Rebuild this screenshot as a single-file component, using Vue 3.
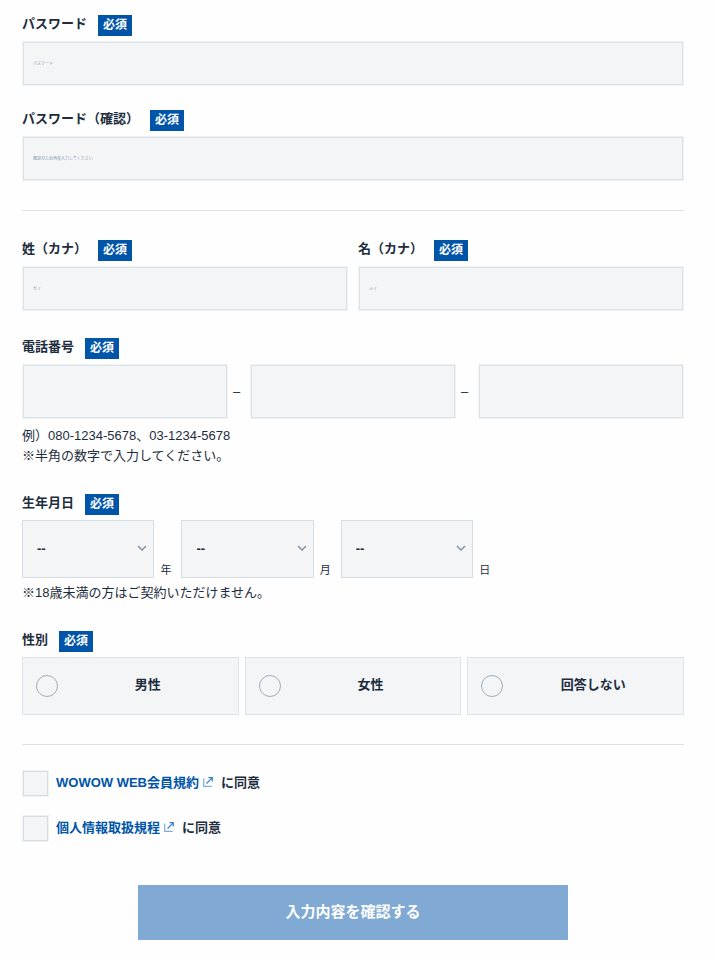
<template>
  <form class="entry-form" lang="ja" @submit.prevent>
    <div class="field">
      <div class="field-head">
        <label class="field-label" for="password">パスワード</label>
        <span class="required">必須</span>
      </div>
      <input id="password" v-model="form.password" class="text-input" type="password" placeholder="パスワード" autocomplete="new-password">
    </div>

    <div class="field">
      <div class="field-head">
        <label class="field-label" for="password-confirm">パスワード（確認）</label>
        <span class="required">必須</span>
      </div>
      <input id="password-confirm" v-model="form.passwordConfirm" class="text-input" type="password" placeholder="確認のため再度入力してください" autocomplete="new-password">
    </div>

    <hr class="divider">

    <div class="name-row">
      <div v-for="item in nameFields" :key="item.id" class="field">
        <div class="field-head">
          <label class="field-label" :for="item.id">{{ item.label }}</label>
          <span class="required">必須</span>
        </div>
        <input :id="item.id" v-model="form[item.id]" class="text-input" type="text" :placeholder="item.placeholder">
      </div>
    </div>

    <div class="field" role="group" aria-labelledby="tel-label">
      <div class="field-head">
        <label id="tel-label" class="field-label" for="tel-0">電話番号</label>
        <span class="required">必須</span>
      </div>
      <div class="tel-row">
        <template v-for="(part, i) in form.tel" :key="i">
          <span v-if="i > 0" class="tel-dash">–</span>
          <input :id="`tel-${i}`" v-model="form.tel[i]" class="text-input tel-input" type="tel" aria-labelledby="tel-label">
        </template>
      </div>
      <p class="note">例）080-1234-5678、03-1234-5678<br>※半角の数字で入力してください。</p>
    </div>

    <div class="field" role="group" aria-labelledby="birth-label">
      <div class="field-head">
        <label id="birth-label" class="field-label" for="year">生年月日</label>
        <span class="required">必須</span>
      </div>
      <div class="birth-row">
        <template v-for="item in birthFields" :key="item.id">
          <div class="select-wrap">
            <select :id="item.id" v-model="form[item.id]" class="select">
              <option value="">--</option>
              <option v-for="n in item.options" :key="n" :value="n">{{ n }}</option>
            </select>
            <svg class="chevron" viewBox="0 0 10 6" aria-hidden="true">
              <path d="M1 1l4 4 4-4" />
            </svg>
          </div>
          <label class="unit" :for="item.id">{{ item.unit }}</label>
        </template>
      </div>
      <p class="note">※18歳未満の方はご契約いただけません。</p>
    </div>

    <div class="field" role="radiogroup" aria-labelledby="gender-label">
      <div class="field-head">
        <span id="gender-label" class="field-label">性別</span>
        <span class="required">必須</span>
      </div>
      <div class="radio-row">
        <label v-for="item in genders" :key="item" class="radio-card">
          <input v-model="form.gender" class="radio" type="radio" name="gender" :value="item">
          <span class="radio-text">{{ item }}</span>
        </label>
      </div>
    </div>

    <hr class="divider">

    <div class="agreements">
      <div v-for="item in agreements" :key="item.id" class="agreement">
        <input :id="item.id" v-model="form[item.id]" class="checkbox" type="checkbox">
        <label class="agreement-label" :for="item.id">
          <a class="link" href="#">{{ item.text }}<svg class="external" viewBox="0 0 10 10" aria-hidden="true">
            <path d="M.7 1.500v7.800h8" opacity=".65" />
            <path d="M5.500 .7h3.800v3.800M9.200 .8L3.500 6.500" />
          </svg></a>
          <span>に同意</span>
        </label>
      </div>
    </div>

    <button class="submit" type="submit">入力内容を確認する</button>
  </form>
</template>

<script setup>
import { reactive } from 'vue';

const range = (from, to) => Array.from({ length: to - from + 1 }, (_, i) => from + i);

const form = reactive({
  password: '',
  passwordConfirm: '',
  sei: '',
  mei: '',
  tel: ['', '', ''],
  year: '',
  month: '',
  day: '',
  gender: '',
  terms: false,
  privacy: false
});

const nameFields = [
  { id: 'sei', label: '姓（カナ）', placeholder: 'セイ' },
  { id: 'mei', label: '名（カナ）', placeholder: 'メイ' }
];

const birthFields = [
  { id: 'year', unit: '年', options: range(1920, 2010) },
  { id: 'month', unit: '月', options: range(1, 12) },
  { id: 'day', unit: '日', options: range(1, 31) }
];

const genders = ['男性', '女性', '回答しない'];

const agreements = [
  { id: 'terms', text: 'WOWOW WEB会員規約' },
  { id: 'privacy', text: '個人情報取扱規程' }
];
</script>

<style>
body {
  margin: 0;
  background: #fefefe;
}
</style>

<style scoped>
.entry-form {
  box-sizing: border-box;
  padding: 15px 31px 19px 22px;
  color: #1d2d3d;
  font-family: 'Liberation Sans', 'Noto Sans CJK JP', sans-serif;
  font-size: 13px;
  line-height: 20px;
}

.entry-form *,
.entry-form *::before {
  box-sizing: border-box;
}

input,
select,
button {
  margin: 0;
  color: inherit;
  font-family: inherit;
  border-radius: 0;
  appearance: none;
}

/* 項目 */
.field + .field {
  margin-top: 24px;
}

.field-head {
  display: flex;
  align-items: flex-start;
  gap: 11px;
  height: 21px;
  margin-bottom: 5px;
}

.field-label {
  font-weight: 700;
  line-height: 18px;
}

.required {
  padding: 0 5px;
  background: #0055a8;
  color: #fff;
  font-size: 12px;
  font-weight: 700;
  line-height: 20px;
  height: 21px;
}

.text-input {
  display: block;
  width: 100%;
  height: 45px;
  padding: 0 10px;
  background: #f3f5f7;
  border: 1px solid #f0f2f4;
  box-shadow: inset 0 0 0 1px #dce1e6;
  font-size: 4px;
}

.text-input::placeholder {
  color: #8d9cb0;
  opacity: 1;
}

.divider {
  height: 1px;
  margin: 29px 0;
  border: 0;
  background: #dfe2e6;
}

.name-row {
  display: grid;
  grid-template-columns: 1fr 1fr;
  gap: 10px;
  margin-bottom: 27px;
}

.name-row .field {
  margin-top: 0;
}

/* 電話番号 */
.tel-row {
  display: flex;
  align-items: center;
}

.tel-input {
  flex: 1;
  min-width: 0;
  height: 55px;
  font-size: 13px;
}

.tel-dash {
  width: 22px;
  padding-left: 5px;
  line-height: 18px;
}

.note {
  margin: 7px 0 28px;
}

/* 生年月日 */
.birth-row {
  display: flex;
  align-items: flex-end;
}

.select-wrap {
  position: relative;
  width: 20%;
}

.select {
  display: block;
  width: 100%;
  height: 58px;
  padding: 0 14px 2px;
  background: #f3f5f7;
  border: 1px solid #d6dde4;
  font-size: 13px;
  font-weight: 700;
}

.chevron {
  position: absolute;
  top: 50%;
  right: 7px;
  width: 10px;
  height: 6px;
  margin-top: -4px;
  fill: none;
  stroke: #8494a5;
  stroke-width: 1.5;
  pointer-events: none;
}

.unit {
  width: 27px;
  padding-left: 6px;
  font-size: 11px;
  line-height: 16px;
}

.birth-row + .note {
  margin-top: 5px;
}

/* 性別 */
.radio-row {
  display: grid;
  grid-template-columns: repeat(3, 1fr);
  gap: 6px;
}

.radio-card {
  display: flex;
  align-items: center;
  height: 58px;
  padding-left: 13px;
  background: #f3f5f7;
  border: 1px solid #dfe2e8;
}

.radio {
  flex: none;
  width: 22px;
  height: 22px;
  background: transparent;
  border: 1px solid #a0adba;
  border-radius: 50%;
}

.radio:checked {
  border: 6px solid #0055a8;
}

.radio-text {
  flex: 1;
  padding-bottom: 2px;
  font-weight: 700;
  text-align: center;
}

/* 同意 */
.agreements {
  display: grid;
  gap: 18px;
  margin-top: -4px;
}

.agreement {
  display: flex;
  align-items: center;
  gap: 7px;
}

.checkbox {
  width: 27px;
  height: 27px;
  background: #f3f5f7;
  border: 1px solid #f0f2f4;
  box-shadow: inset 0 0 0 1px #d6dde4;
}

.checkbox:checked {
  background: #0055a8;
}

.agreement-label {
  display: flex;
  gap: 8px;
  padding-bottom: 2px;
  font-weight: 700;
}

.link {
  color: #0055a8;
  text-decoration: none;
}

.external {
  width: 10px;
  height: 10px;
  margin-left: 4px;
  fill: none;
  stroke: #3b80c2;
  stroke-width: 1.2;
}

.submit {
  display: block;
  width: 65%;
  height: 55px;
  margin: 43px auto 0;
  padding: 0 0 4px;
  background: #80aad3;
  border: 0;
  color: #fff;
  font-size: 15px;
  font-weight: 700;
}
</style>
